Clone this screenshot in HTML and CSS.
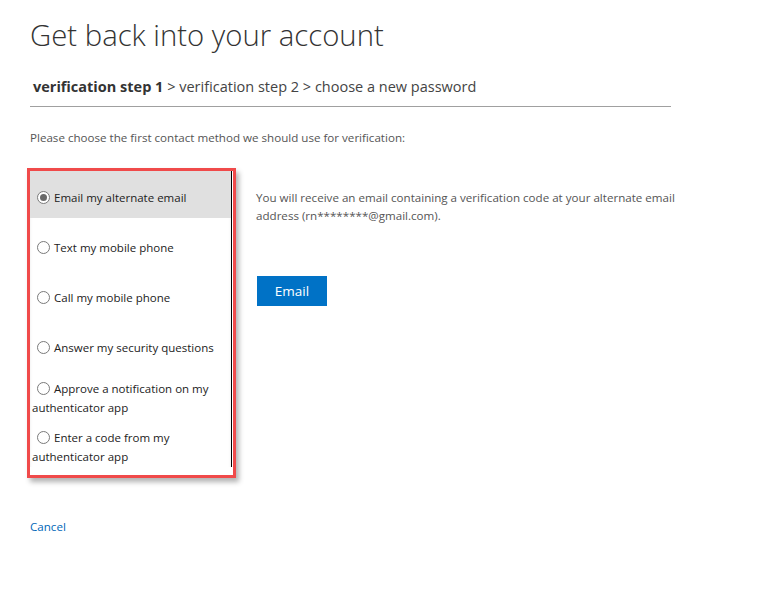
FILE: index.html
```html
<!DOCTYPE html>
<html lang="en">
<head>
<meta charset="utf-8">
<title>Get back into your account</title>
<link rel="stylesheet" href="styles.css">
</head>
<body>
<div class="page">
  <h1 class="title">Get back into your account</h1>
  <div class="steps"><span class="current">verification step 1</span> &gt; verification step 2 &gt; choose a new password</div>
  <p class="intro">Please choose the first contact method we should use for verification:</p>
  <div class="main">
    <div class="outline">
      <div class="list">
        <label class="opt selected"><span class="radio checked"></span>Email my alternate email</label>
        <label class="opt"><span class="radio"></span>Text my mobile phone</label>
        <label class="opt"><span class="radio"></span>Call my mobile phone</label>
        <label class="opt"><span class="radio"></span>Answer my security questions</label>
        <label class="opt two"><span class="radio"></span>Approve a notification on my authenticator app</label>
        <label class="opt two"><span class="radio"></span>Enter a code from my authenticator app</label>
      </div>
    </div>
    <div class="detail">
      <p class="desc">You will receive an email containing a verification code at your alternate email address (rn********@gmail.com).</p>
      <button class="btn" type="button">Email</button>
    </div>
  </div>
  <a class="cancel" href="#">Cancel</a>
</div>
</body>
</html>
```
FILE: styles.css
```css
html, body {
  margin: 0;
  padding: 0;
  background: #fff;
}
body {
  font-family: "Open Sans", "Noto Sans", sans-serif;
  color: #333;
}
.page {
  padding: 15px 0 0 30px;
}
.title {
  margin: 0;
  font-weight: 300;
  font-size: 29.3px;
  line-height: 40px;
  color: #333;
}
.steps {
  width: 638px;
  margin-top: 22px;
  padding: 0 0 9px 3px;
  border-bottom: 1px solid #a0a0a0;
  font-size: 14.5px;
  line-height: 20px;
  color: #444;
}
.steps .current {
  font-weight: 700;
  color: #333;
}
.intro {
  margin: 22px 0 0 0;
  font-size: 11.6px;
  line-height: 18px;
  color: #555;
}
.main {
  display: flex;
  margin-top: 21px;
}
.outline {
  margin-left: -3px;
  width: 203px;
  border: 3px solid #f04a4a;
  padding-bottom: 8px;
  box-shadow: 3px 4px 5px rgba(0, 0, 0, 0.3);
  background: #fff;
}
.list {
  width: 201px;
  border-right: 1px solid #000;
  box-shadow: inset 0 4px 4px -2px rgba(0, 0, 0, 0.25);
  padding-bottom: 1px;
}
.opt {
  display: block;
  padding: 17px 0 11px 2px;
  margin-bottom: 3px;
  font-size: 11.5px;
  line-height: 19px;
  color: #222;
}
.opt.selected {
  background: #e0e0e0;
}
.opt.two {
  padding: 8px 0 0 2px;
  margin-bottom: 3px;
}
.opt.two:last-child {
  margin-bottom: 0;
}
.radio {
  display: inline-block;
  box-sizing: border-box;
  width: 13px;
  height: 13px;
  margin: 0 4px 0 5px;
  border: 1px solid #7a7a7a;
  border-radius: 50%;
  background: #fff;
  vertical-align: -2px;
  position: relative;
}
.radio.checked::after {
  content: "";
  position: absolute;
  left: 2px;
  top: 2px;
  width: 7px;
  height: 7px;
  border-radius: 50%;
  background: #6a6a6a;
}
.detail {
  margin-left: 20px;
  padding-top: 21px;
}
.desc {
  margin: 0;
  width: 430px;
  font-size: 11.6px;
  line-height: 18px;
  color: #555;
}
.btn {
  display: block;
  margin-top: 51px;
  margin-left: 1px;
  width: 70px;
  height: 30px;
  border: none;
  background: #0072c6;
  color: #fff;
  font-family: inherit;
  font-size: 13.5px;
  font-weight: 400;
  padding: 0;
}
.cancel {
  display: inline-block;
  margin-top: 40px;
  font-size: 11.6px;
  line-height: 18px;
  color: #0067b8;
  text-decoration: none;
}
```
